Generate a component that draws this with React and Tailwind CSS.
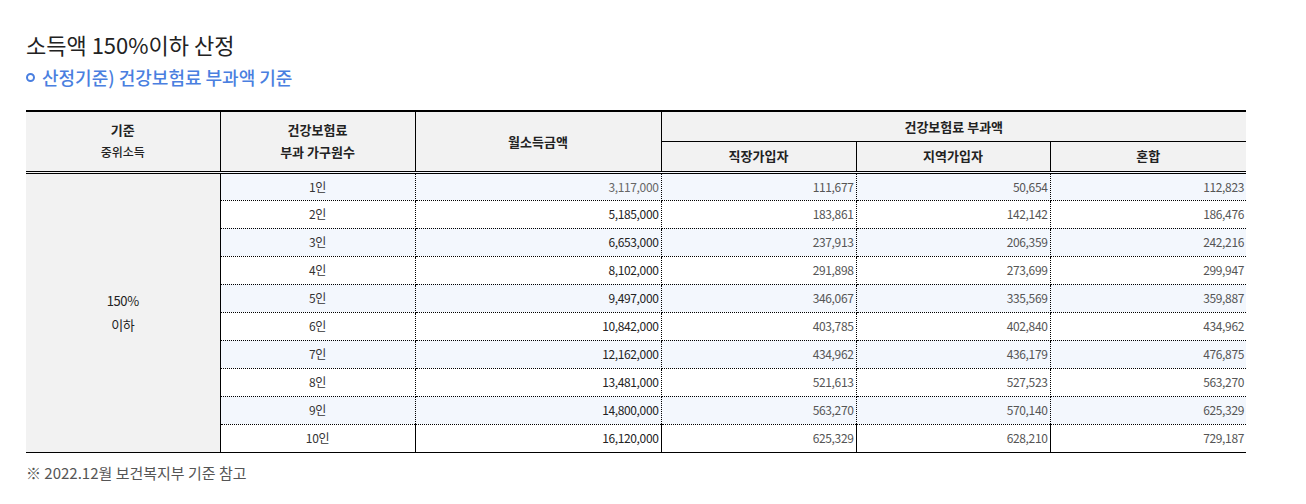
const ROWS = [
  ['1인', '3,117,000', '111,677', '50,654', '112,823'],
  ['2인', '5,185,000', '183,861', '142,142', '186,476'],
  ['3인', '6,653,000', '237,913', '206,359', '242,216'],
  ['4인', '8,102,000', '291,898', '273,699', '299,947'],
  ['5인', '9,497,000', '346,067', '335,569', '359,887'],
  ['6인', '10,842,000', '403,785', '402,840', '434,962'],
  ['7인', '12,162,000', '434,962', '436,179', '476,875'],
  ['8인', '13,481,000', '521,613', '527,523', '563,270'],
  ['9인', '14,800,000', '563,270', '570,140', '625,329'],
  ['10인', '16,120,000', '625,329', '628,210', '729,187'],
]

const font = { fontFamily: '"Noto Sans CJK KR", "Noto Sans", sans-serif' }

export default function App() {
  return (
    <div className="bg-white w-[1306px] h-[504px] pl-[26px] pt-[28px]" style={font}>
      <h1 className="text-[22px] leading-[32px] text-[#222] font-normal">소득액 150%이하 산정</h1>
      <p className="mt-[4px] flex items-center gap-[7px] text-[18px] leading-[26px] font-medium text-[#4a7fe0]">
        <span className="inline-block w-[9px] h-[9px] rounded-full border-2 border-[#4a7fe0]" />
        산정기준) 건강보험료 부과액 기준
      </p>

      <table className="mt-[20px] w-[1220px] border-collapse table-fixed text-[#222]">
        <colgroup>
          <col className="w-[194px]" />
          <col className="w-[195px]" />
          <col className="w-[246px]" />
          <col className="w-[195px]" />
          <col className="w-[194px]" />
          <col className="w-[196px]" />
        </colgroup>
        <thead className="bg-[#f2f2f2] text-[13px] font-bold">
          <tr className="h-[30px] border-t-2 border-black">
            <th rowSpan={2} className="border-r border-black border-b-[3px] border-b-black border-double leading-[22px]">
              기준
              <br />
              <span className="font-medium text-[12px]">중위소득</span>
            </th>
            <th rowSpan={2} className="border-r border-black border-b-[3px] border-b-black border-double leading-[22px]">
              건강보험료
              <br />
              부과 가구원수
            </th>
            <th rowSpan={2} className="border-r border-black border-b-[3px] border-b-black border-double">
              월소득금액
            </th>
            <th colSpan={3} className="border-b border-black">
              건강보험료 부과액
            </th>
          </tr>
          <tr className="h-[31px]">
            <th className="border-r border-black border-b-[3px] border-double">직장가입자</th>
            <th className="border-r border-black border-b-[3px] border-double">지역가입자</th>
            <th className="border-b-[3px] border-black border-double">혼합</th>
          </tr>
        </thead>
        <tbody className="text-[12px] tracking-[-0.03em]">
          {ROWS.map((r, i) => {
            const last = i === ROWS.length - 1
            const bg = i % 2 === 0 ? 'bg-[#f3f7fd]' : 'bg-white'
            const bottom = last ? 'border-b border-b-black border-solid' : 'border-b border-b-black border-dotted'
            return (
              <tr key={r[0]} className="h-[28px]">
                {i === 0 && (
                  <td
                    rowSpan={10}
                    className="bg-[#f2f2f2] border-r border-r-black border-b border-b-black text-center text-[13px] leading-[24px] text-[#222]"
                  >
                    150%
                    <br />
                    이하
                  </td>
                )}
                <td className={`${bg} ${bottom} border-r border-r-black text-center text-[#333]`}>
                  {r[0]}
                </td>
                <td className={`${bg} ${bottom} border-r border-r-black text-right pr-[2px] ${i === 0 ? 'text-[#666]' : 'text-[#222]'}`}>
                  {r[1]}
                </td>
                <td className={`${bg} ${bottom} border-r border-r-black text-right pr-[2px] text-[#555]`}>{r[2]}</td>
                <td className={`${bg} ${bottom} border-r border-r-black text-right pr-[2px] text-[#555]`}>{r[3]}</td>
                <td className={`${bg} ${bottom} text-right pr-[2px] text-[#555]`}>{r[4]}</td>
              </tr>
            )
          })}
        </tbody>
      </table>

      <p className="mt-[9px] text-[15px] leading-[22px] text-[#555]">※ 2022.12월 보건복지부 기준 참고</p>
    </div>
  )
}
